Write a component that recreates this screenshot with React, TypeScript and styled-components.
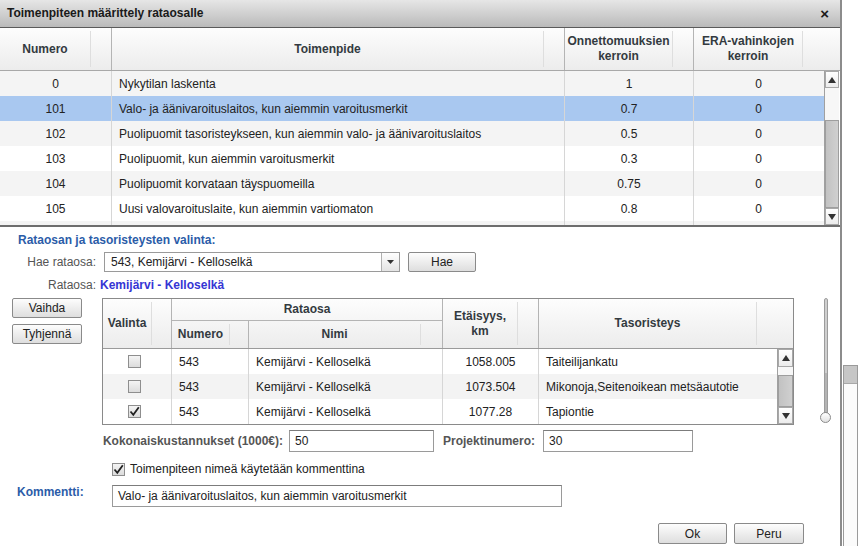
import React from 'react'
import styled, { createGlobalStyle } from 'styled-components'

const GlobalStyle = createGlobalStyle`
  html, body {
    margin: 0;
    padding: 0;
    background: #fff;
  }
  body {
    font-family: "Liberation Sans", Arial, sans-serif;
    font-size: 12px;
    color: #222;
  }
  * {
    box-sizing: border-box;
  }
`

const Page = styled.div`
  display: flex;
  width: 862px;
  height: 546px;
  overflow: hidden;
  background: #fff;
`

const Dialog = styled.div`
  width: 842px;
  height: 546px;
  flex: none;
  display: flex;
  flex-direction: column;
  background: #fff;
  border-right: 2px solid #8c8c8c;
`

const TitleBar = styled.div`
  height: 28px;
  flex: none;
  display: flex;
  align-items: center;
  justify-content: space-between;
  padding: 0 11px 1px 7px;
  background: linear-gradient(#e6e6e6, #bababa);
  border-bottom: 1px solid #5a5a5a;
  font-weight: bold;
  color: #1a1a1a;
`

const Close = styled.span`
  font-size: 15px;
  line-height: 1;
`

// yläosan taulukko
const TOP_COLS = '112px 453px 129px 130px'

const TopHead = styled.div`
  display: grid;
  grid-template-columns: ${TOP_COLS} 15px;
  height: 43px;
  flex: none;
  background: linear-gradient(#fdfdfd, #ececec);
  border-bottom: 1px solid #a8a8a8;
`

const HeadCell = styled.div<{ $sep?: number; $noBorder?: boolean; $col?: string; $row?: string }>`
  position: relative;
  display: flex;
  align-items: center;
  justify-content: center;
  text-align: center;
  line-height: 15px;
  font-weight: bold;
  color: #333a40;
  padding-right: ${p => (p.$sep ? p.$sep : 0)}px;
  border-right: 1px solid ${p => (p.$noBorder ? 'transparent' : '#b4b4b4')};
  grid-column: ${p => p.$col || 'auto'};
  grid-row: ${p => p.$row || 'auto'};
  &::after {
    content: '';
    display: ${p => (p.$sep ? 'block' : 'none')};
    position: absolute;
    right: ${p => (p.$sep ? p.$sep - 1 : 0)}px;
    top: 3px;
    bottom: 3px;
    width: 1px;
    background: #dedede;
  }
`

const TopBody = styled.div`
  display: flex;
  height: 156px;
  flex: none;
  border-bottom: 2px solid #6e6e6e;
`

const TopRows = styled.div`
  width: 824px;
  overflow: hidden;
`

const Row = styled.div<{ $cols: string; $bg: string }>`
  display: grid;
  grid-template-columns: ${p => p.$cols};
  height: 25px;
  background: ${p => p.$bg};
`

const Cell = styled.div<{ $align?: 'left' | 'center'; $last?: boolean }>`
  display: flex;
  align-items: center;
  justify-content: ${p => (p.$align === 'left' ? 'flex-start' : 'center')};
  padding: 0 7px;
  white-space: nowrap;
  overflow: hidden;
  color: #222;
  border-right: 1px solid ${p => (p.$last ? 'transparent' : '#d6d6d6')};
`

// vierityspalkki
const ScrollBar = styled.div<{ $w: number }>`
  width: ${p => p.$w}px;
  flex: none;
  display: flex;
  flex-direction: column;
  border-left: 1px solid #a0a0a0;
  background: #f7f7f7;
`

const ArrowBtn = styled.div<{ $h: number }>`
  height: ${p => p.$h}px;
  flex: none;
  display: flex;
  align-items: center;
  justify-content: center;
  background: linear-gradient(#ffffff, #ececec);
  border: 1px solid #a8a8a8;
`

const Spacer = styled.div<{ $h: number }>`
  height: ${p => p.$h}px;
  flex: none;
`

const Thumb = styled.div`
  flex: 1;
  background: linear-gradient(90deg, #c2c2c2, #d0d0d0);
  border: 1px solid #9e9e9e;
`

const Tri = ({ up }: { up?: boolean }) => (
  <svg width="8" height="6" viewBox="0 0 8 6">
    <polygon points={up ? '0,6 8,6 4,0' : '0,0 8,0 4,6'} fill="#333" />
  </svg>
)

const Scroller = ({ w, upH, gap, downH }: { w: number; upH: number; gap: number; downH: number }) => (
  <ScrollBar $w={w}>
    <ArrowBtn $h={upH}>
      <Tri up />
    </ArrowBtn>
    <Spacer $h={gap} />
    <Thumb />
    <ArrowBtn $h={downH}>
      <Tri />
    </ArrowBtn>
  </ScrollBar>
)

// alaosa
const Selection = styled.div`
  display: flex;
  flex-direction: column;
  padding-top: 6px;
`

const SectionTitle = styled.div`
  padding-left: 18px;
  line-height: 14px;
  font-weight: bold;
  color: #2b5ca8;
`

const FieldRow = styled.div<{ $mt: number; $pl?: number; $top?: boolean }>`
  display: flex;
  align-items: ${p => (p.$top ? 'flex-start' : 'center')};
  margin-top: ${p => p.$mt}px;
  padding-left: ${p => p.$pl || 0}px;
`

const Label = styled.div<{ $w?: number; $bold?: boolean; $color?: string; $ml?: number; $left?: boolean }>`
  width: ${p => (p.$w ? `${p.$w}px` : 'auto')};
  flex: none;
  margin-left: ${p => p.$ml || 0}px;
  text-align: ${p => (p.$left ? 'left' : 'right')};
  line-height: 14px;
  color: ${p => p.$color || '#555'};
  font-weight: ${p => (p.$bold ? 'bold' : 'normal')};
  white-space: nowrap;
`

const Select = styled.div`
  width: 296px;
  height: 20px;
  margin-left: 8px;
  display: flex;
  align-items: stretch;
  border: 1px solid #9a9a9a;
  background: #fff;
`

const SelectText = styled.div`
  flex: 1;
  display: flex;
  align-items: center;
  padding-left: 6px;
`

const SelectArrow = styled.div`
  width: 18px;
  display: flex;
  align-items: center;
  justify-content: center;
  border-left: 1px solid #b0b0b0;
  background: linear-gradient(#fefefe, #e4e4e4);
`

const Button = styled.button<{ $w: number; $h?: number; $ml?: number }>`
  width: ${p => p.$w}px;
  height: ${p => p.$h || 20}px;
  margin-left: ${p => p.$ml || 0}px;
  padding: 0;
  font-family: "Liberation Sans", Arial, sans-serif;
  font-size: 12px;
  color: #222;
  background: linear-gradient(#fdfdfd, #dedede);
  border: 1px solid #8a8a8a;
  border-radius: 2px;
`

const Value = styled.div`
  margin-left: 4px;
  font-weight: bold;
  color: #3535d4;
  line-height: 14px;
`

const Middle = styled.div`
  display: flex;
  align-items: flex-start;
  padding-left: 12px;
  margin-top: 6px;
`

const ButtonCol = styled.div`
  display: flex;
  flex-direction: column;
  gap: 6px;
`

// sisempi taulukko
const INNER_HEAD = '69px 77px 194px 96px 254px'
const INNER_BODY = '69px 77px 194px 96px 238px'

const InnerTable = styled.div`
  width: 692px;
  margin-left: 20px;
  border: 1px solid #8a8a8a;
`

const InnerHead = styled.div`
  display: grid;
  grid-template-columns: ${INNER_HEAD};
  grid-template-rows: 22px 27px;
  background: linear-gradient(#fdfdfd, #ececec);
  border-bottom: 1px solid #9a9a9a;
`

const GroupCell = styled(HeadCell)`
  border-bottom: 1px solid #b4b4b4;
`

const InnerBody = styled.div`
  display: flex;
  height: 75px;
`

const InnerRows = styled.div`
  width: 674px;
`

const Check = styled.span<{ $ml?: number }>`
  width: 13px;
  height: 13px;
  flex: none;
  margin-left: ${p => p.$ml || 0}px;
  display: inline-flex;
  align-items: center;
  justify-content: center;
  border: 1px solid #8e8e8e;
  background: linear-gradient(#f4f4f4, #dcdcdc);
`

const CheckBox = ({ checked, ml }: { checked?: boolean; ml?: number }) => (
  <Check $ml={ml}>
    {checked && (
      <svg width="11" height="11" viewBox="0 0 11 11">
        <path d="M1.5 5.5 L4.3 8.8 L9.8 1.2" fill="none" stroke="#222" strokeWidth="1.8" />
      </svg>
    )}
  </Check>
)

const Slider = styled.div`
  margin-left: 26px;
  width: 11px;
  display: flex;
  flex-direction: column;
  align-items: center;
`

const SliderTrack = styled.div`
  width: 4px;
  height: 116px;
  border: 1px solid #9c9c9c;
  border-radius: 2px;
  background: linear-gradient(#cfcfcf 0%, #cfcfcf 65%, #b4b4b4 65%);
`

const Knob = styled.div`
  width: 11px;
  height: 11px;
  margin-top: -2px;
  border-radius: 50%;
  border: 1px solid #8a8a8a;
  background: linear-gradient(#fff, #e2e2e2);
`

const Input = styled.div<{ $w: number; $ml?: number }>`
  width: ${p => p.$w}px;
  height: 22px;
  margin-left: ${p => p.$ml || 0}px;
  display: flex;
  align-items: center;
  padding-left: 5px;
  border: 1px solid #9a9a9a;
  border-top-color: #7c7c7c;
  background: #fff;
  white-space: nowrap;
`

const Footer = styled.div`
  display: flex;
  justify-content: flex-end;
  padding-right: 36px;
  margin-top: 16px;
`

const SideStrip = styled.div`
  flex: 1;
  padding: 365px 4px 0 1px;
`

const SideBox = styled.div`
  height: 200px;
  border: 1px solid #9a9a9a;
  background: #fbfbfb;
`

const SideCap = styled.div`
  height: 18px;
  background: #c6c6c6;
  border-bottom: 1px solid #a8a8a8;
`

interface IMeasure {
  num: string
  name: string
  acc: string
  era: string
}

const measures: IMeasure[] = [
  { num: '0', name: 'Nykytilan laskenta', acc: '1', era: '0' },
  { num: '101', name: 'Valo- ja äänivaroituslaitos, kun aiemmin varoitusmerkit', acc: '0.7', era: '0' },
  { num: '102', name: 'Puolipuomit tasoristeykseen, kun aiemmin valo- ja äänivaroituslaitos', acc: '0.5', era: '0' },
  { num: '103', name: 'Puolipuomit, kun aiemmin varoitusmerkit', acc: '0.3', era: '0' },
  { num: '104', name: 'Puolipuomit korvataan täyspuomeilla', acc: '0.75', era: '0' },
  { num: '105', name: 'Uusi valovaroituslaite, kun aiemmin vartiomaton', acc: '0.8', era: '0' },
  { num: '', name: '', acc: '', era: '' },
]

const crossings = [
  { checked: false, num: '543', name: 'Kemijärvi - Kelloselkä', km: '1058.005', place: 'Taiteilijankatu' },
  { checked: false, num: '543', name: 'Kemijärvi - Kelloselkä', km: '1073.504', place: 'Mikonoja,Seitenoikean metsäautotie' },
  { checked: true, num: '543', name: 'Kemijärvi - Kelloselkä', km: '1077.28', place: 'Tapiontie' },
]

const App = () => {
  const selected = '101'
  return (
    <Page>
      <GlobalStyle />
      <Dialog>
        <TitleBar>
          <span>Toimenpiteen määrittely rataosalle</span>
          <Close>×</Close>
        </TitleBar>

        <TopHead>
          <HeadCell $sep={21}>Numero</HeadCell>
          <HeadCell $sep={21}>Toimenpide</HeadCell>
          <HeadCell $sep={21}>
            Onnettomuuksien
            <br />
            kerroin
          </HeadCell>
          <HeadCell $sep={21} $noBorder>
            ERA-vahinkojen
            <br />
            kerroin
          </HeadCell>
          <HeadCell $noBorder />
        </TopHead>
        <TopBody>
          <TopRows>
            {measures.map((m, i) => (
              <Row
                key={i}
                $cols={TOP_COLS}
                $bg={m.num === selected ? '#a9c8f0' : i % 2 === 0 ? '#f4f4f4' : '#ffffff'}
              >
                <Cell>{m.num}</Cell>
                <Cell $align="left">{m.name}</Cell>
                <Cell>{m.acc}</Cell>
                <Cell $last>{m.era}</Cell>
              </Row>
            ))}
          </TopRows>
          <Scroller w={15} upH={17} gap={32} downH={17} />
        </TopBody>

        <Selection>
          <SectionTitle>Rataosan ja tasoristeysten valinta:</SectionTitle>
          <FieldRow $mt={5}>
            <Label $w={96}>Hae rataosa:</Label>
            <Select>
              <SelectText>543, Kemijärvi - Kelloselkä</SelectText>
              <SelectArrow>
                <svg width="7" height="4" viewBox="0 0 7 4">
                  <polygon points="0,0 7,0 3.5,4" fill="#333" />
                </svg>
              </SelectArrow>
            </Select>
            <Button $w={68} $ml={8}>Hae</Button>
          </FieldRow>
          <FieldRow $mt={6}>
            <Label $w={96}>Rataosa:</Label>
            <Value>Kemijärvi - Kelloselkä</Value>
          </FieldRow>

          <Middle>
            <ButtonCol>
              <Button $w={70}>Vaihda</Button>
              <Button $w={70}>Tyhjennä</Button>
            </ButtonCol>
            <InnerTable>
              <InnerHead>
                <HeadCell $sep={20} $row="1 / 3">Valinta</HeadCell>
                <GroupCell $col="2 / 4" $row="1">Rataosa</GroupCell>
                <HeadCell $sep={19} $col="2" $row="2">Numero</HeadCell>
                <HeadCell $sep={22} $col="3" $row="2">Nimi</HeadCell>
                <HeadCell $sep={21} $col="4" $row="1 / 3">
                  Etäisyys,
                  <br />
                  km
                </HeadCell>
                <HeadCell $sep={36} $col="5" $row="1 / 3" $noBorder>Tasoristeys</HeadCell>
              </InnerHead>
              <InnerBody>
                <InnerRows>
                  {crossings.map((c, i) => (
                    <Row key={i} $cols={INNER_BODY} $bg={i === 1 ? '#f3f3f3' : '#ffffff'}>
                      <Cell>
                        <CheckBox checked={c.checked} ml={-6} />
                      </Cell>
                      <Cell $align="left">{c.num}</Cell>
                      <Cell $align="left">{c.name}</Cell>
                      <Cell>{c.km}</Cell>
                      <Cell $align="left" $last>{c.place}</Cell>
                    </Row>
                  ))}
                </InnerRows>
                <Scroller w={16} upH={18} gap={8} downH={17} />
              </InnerBody>
            </InnerTable>
            <Slider>
              <SliderTrack />
              <Knob />
            </Slider>
          </Middle>

          <FieldRow $mt={5} $pl={100}>
            <Label $w={183} $bold>Kokonaiskustannukset (1000€):</Label>
            <Input $w={145} $ml={6}>50</Input>
            <Label $w={94} $bold $ml={9} $left>Projektinumero:</Label>
            <Input $w={150} $ml={6}>30</Input>
          </FieldRow>

          <FieldRow $mt={10} $pl={112}>
            <CheckBox checked />
            <Label $color="#222" $ml={5} $left>Toimenpiteen nimeä käytetään kommenttina</Label>
          </FieldRow>

          <FieldRow $mt={9} $pl={17} $top>
            <Label $w={95} $bold $color="#2b5ca8" $left>
              Kommentti:
            </Label>
            <Input $w={450}>Valo- ja äänivaroituslaitos, kun aiemmin varoitusmerkit</Input>
          </FieldRow>

          <Footer>
            <Button $w={69} $h={21}>Ok</Button>
            <Button $w={70} $h={21} $ml={7}>Peru</Button>
          </Footer>
        </Selection>
      </Dialog>
      <SideStrip>
        <SideBox>
          <SideCap />
        </SideBox>
      </SideStrip>
    </Page>
  )
}

export default App
